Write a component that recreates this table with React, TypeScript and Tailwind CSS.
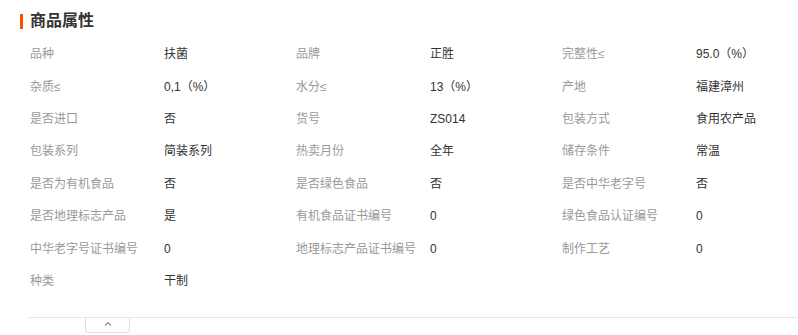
const ATTRS: [string, string][] = [
  ['品种', '扶菌'],
  ['品牌', '正胜'],
  ['完整性≤', '95.0（%）'],
  ['杂质≤', '0,1（%）'],
  ['水分≤', '13（%）'],
  ['产地', '福建漳州'],
  ['是否进口', '否'],
  ['货号', 'ZS014'],
  ['包装方式', '食用农产品'],
  ['包装系列', '简装系列'],
  ['热卖月份', '全年'],
  ['储存条件', '常温'],
  ['是否为有机食品', '否'],
  ['是否绿色食品', '否'],
  ['是否中华老字号', '否'],
  ['是否地理标志产品', '是'],
  ['有机食品证书编号', '0'],
  ['绿色食品认证编号', '0'],
  ['中华老字号证书编号', '0'],
  ['地理标志产品证书编号', '0'],
  ['制作工艺', '0'],
  ['种类', '干制'],
];

export default function App() {
  return (
    <div
      className="w-[798px] h-[335px] bg-white overflow-hidden"
      style={{ fontFamily: '"Liberation Sans", "Noto Sans CJK SC", sans-serif' }}
    >
      {/* Title */}
      <div className="flex items-center h-[16px] mt-[13px] ml-[20px]">
        <span className="w-[3px] h-[15px] bg-[#ff5000]" />
        <h2 className="ml-[7px] text-[16px] font-bold text-[#333] leading-none">商品属性</h2>
      </div>

      {/* Attribute grid */}
      <div className="mt-[9px] ml-[30px] grid grid-cols-3 w-[798px]">
        {ATTRS.map(([label, value]) => (
          <div key={label} className="flex items-center h-[32.43px] text-[12px]">
            <span className="w-[134px] text-[#999] shrink-0">{label}</span>
            <span className="text-[#333]">{value}</span>
          </div>
        ))}
      </div>

      {/* Fold bar */}
      <div className="mt-[20px] ml-[29px] border-t border-[#e5e5e5]">
        <button className="ml-[56px] w-[45px] h-[15px] border border-t-0 border-[#ddd] rounded-b-[4px] flex items-center justify-center pb-[4px]">
          <svg width="8" height="5" viewBox="0 0 8 5">
            <polyline points="1,4.5 4,1.5 7,4.5" fill="none" stroke="#8a94a6" strokeWidth="1.2" />
          </svg>
        </button>
      </div>
    </div>
  );
}
